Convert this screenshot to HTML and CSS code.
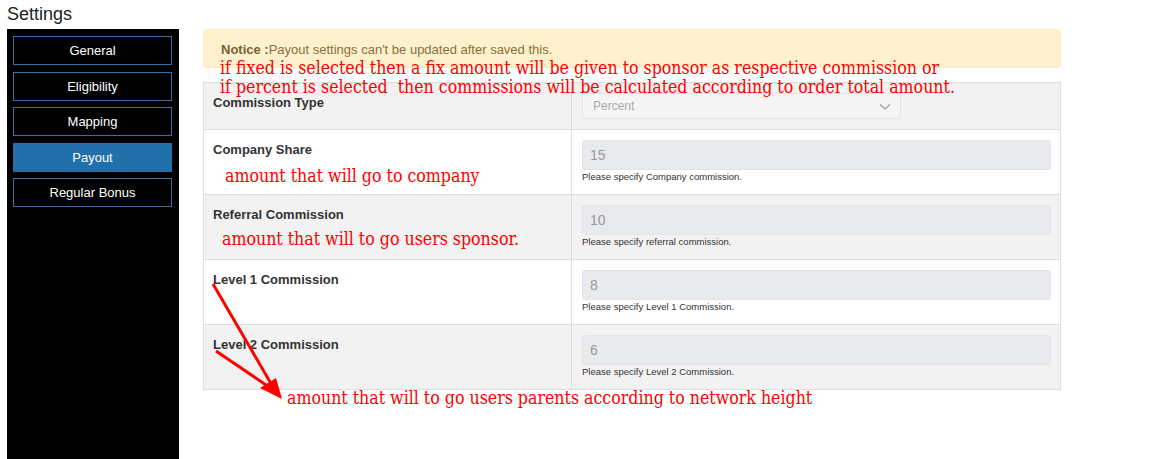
FILE: index.html
```html
<!DOCTYPE html>
<html>
<head>
<meta charset="utf-8">
<link rel="stylesheet" href="styles.css">
</head>
<body>
<div class="title">Settings</div>
<div class="layout">
  <nav class="sidebar">
    <a class="nav-btn">General</a>
    <a class="nav-btn">Eligibility</a>
    <a class="nav-btn">Mapping</a>
    <a class="nav-btn active">Payout</a>
    <a class="nav-btn">Regular Bonus</a>
  </nav>
  <main class="main">
    <div class="notice"><b>Notice :</b>Payout settings can't be updated after saved this.</div>
    <div class="form-table">
      <div class="row odd">
        <div class="label-cell"><label>Commission Type</label></div>
        <div class="value-cell select-cell">
          <div class="select">Percent
            <svg class="chev" width="12" height="8" viewBox="0 0 12 8"><path d="M1 1.5 L6 6 L11 1.5" fill="none" stroke="#9a9a9a" stroke-width="1.3"/></svg>
          </div>
        </div>
      </div>
      <div class="row">
        <div class="label-cell"><label>Company Share</label></div>
        <div class="value-cell"><div class="input">15</div><div class="help">Please specify Company commission.</div></div>
      </div>
      <div class="row odd">
        <div class="label-cell"><label>Referral Commission</label></div>
        <div class="value-cell"><div class="input">10</div><div class="help">Please specify referral commission.</div></div>
      </div>
      <div class="row">
        <div class="label-cell"><label>Level 1 Commission</label></div>
        <div class="value-cell"><div class="input">8</div><div class="help">Please specify Level 1 Commission.</div></div>
      </div>
      <div class="row odd">
        <div class="label-cell"><label>Level 2 Commission</label></div>
        <div class="value-cell"><div class="input">6</div><div class="help">Please specify Level 2 Commission.</div></div>
      </div>
    </div>

    <div class="note note-top">if fixed is selected then a fix amount will be given to sponsor as respective commission or<br>if percent is selected&nbsp; then commissions will be calculated according to order total amount.</div>
    <div class="note note-company">amount that will go to company</div>
    <div class="note note-sponsor">amount that will to go users sponsor.</div>
    <div class="note note-parents">amount that will to go users parents according to network height</div>
    <svg class="arrows" width="300" height="400" viewBox="0 0 300 400">
      <line x1="10" y1="255" x2="70" y2="358" stroke="#ff0000" stroke-width="3"/>
      <line x1="13" y1="322" x2="66" y2="358" stroke="#ff0000" stroke-width="3"/>
      <polygon points="79,370 57,359 73,349" fill="#ff0000"/>
    </svg>
  </main>
</div>
</body>
</html>
```
FILE: styles.css
```css
* { box-sizing: border-box; }
html, body { margin: 0; padding: 0; background: #fff; }
body {
  font-family: "Liberation Sans", Arial, sans-serif;
  color: #333;
  width: 1173px;
  height: 459px;
  overflow: hidden;
}
.title {
  height: 29px;
  padding: 2px 0 0 7px;
  font-size: 18px;
  line-height: 24px;
  color: #222;
}
.layout {
  display: flex;
  align-items: flex-start;
}
.sidebar {
  margin-left: 7px;
  width: 172px;
  height: 430px;
  background: #000;
  padding: 7px 7px 0 6px;
  display: flex;
  flex-direction: column;
  gap: 6.5px;
}
.nav-btn {
  display: block;
  height: 29px;
  border: 1px solid #3b6ea3;
  color: #fff;
  font-size: 13px;
  line-height: 27px;
  text-align: center;
}
.nav-btn.active {
  background: #2270ab;
  border-color: #2270ab;
}
.main {
  position: relative;
  margin-left: 24px;
  width: 858px;
}
.notice {
  height: 39px;
  background: #fdf2cd;
  border: 1px solid #fbecc4;
  border-radius: 4px;
  padding: 11px 17px 0;
  font-size: 13px;
  line-height: 17px;
  color: #8a6d3b;
}
.notice b { font-weight: bold; color: #7a6030; }
.form-table {
  margin-top: 14px;
  border: 1px solid #dddddd;
  font-size: 13px;
}
.row {
  display: grid;
  grid-template-columns: 368px 1fr;
  background: #fff;
}
.row + .row { border-top: 1px solid #dddddd; }
.row.odd { background: #f2f2f2; }
.label-cell {
  border-right: 1px solid #dddddd;
  padding: 11px 9px 9px;
  line-height: 18px;
}
.label-cell label {
  font-size: 13px;
  line-height: 18px;
  font-weight: bold;
  color: #333;
}
.value-cell {
  padding: 10px 9px 11px 10px;
}
.value-cell.select-cell { padding-bottom: 10px; }
.select {
  position: relative;
  width: 319px;
  height: 26px;
  background: #f5f5f5;
  border: 1px solid #e4e4e4;
  border-radius: 3px;
  padding-left: 10px;
  font-size: 12px;
  line-height: 24px;
  color: #aaa;
}
.chev {
  position: absolute;
  right: 9px;
  top: 9px;
}
.input {
  height: 30px;
  background: #e8eaed;
  border: 1px solid #e1e3e6;
  border-radius: 3px;
  padding-left: 7px;
  font-size: 14px;
  line-height: 28px;
  color: #999;
}
.help {
  margin-top: 1px;
  font-size: 9.5px;
  line-height: 12px;
  color: #333;
}
.note {
  position: absolute;
  font-family: "DejaVu Serif", "Liberation Serif", serif;
  font-stretch: condensed;
  font-size: 17.6px;
  line-height: 19px;
  color: #ff0000;
  white-space: nowrap;
}
.note-top { left: 17px; top: 30px; }
.note-company { left: 22px; top: 138px; }
.note-sponsor { left: 19px; top: 201px; }
.note-parents { left: 84px; top: 360px; }
.arrows {
  position: absolute;
  left: 0;
  top: 0;
}
```
